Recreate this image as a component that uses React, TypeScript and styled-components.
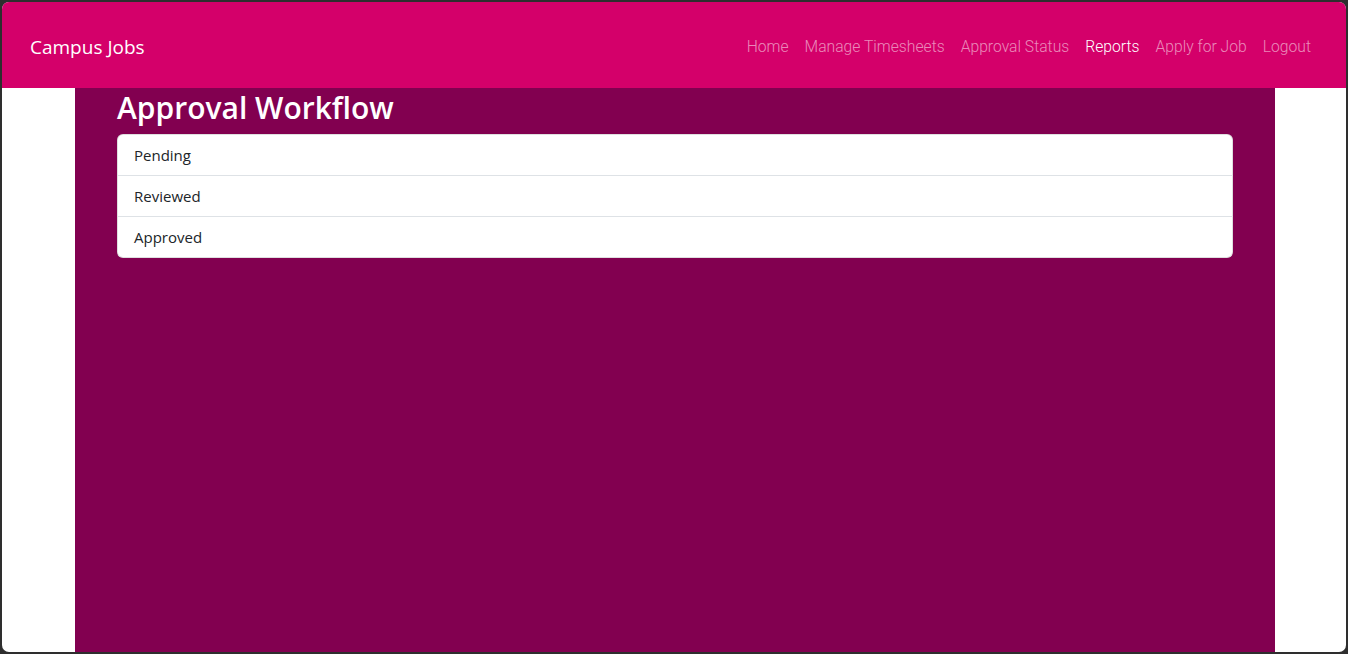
import React from "react";
import styled, { createGlobalStyle } from "styled-components";

const GlobalStyle = createGlobalStyle`
  html, body { margin: 0; padding: 0; height: 100%; }
  body {
    background: #2e2e2e;
    font-family: "Open Sans", "Noto Sans", sans-serif;
    overflow: hidden;
  }
  #root { height: 100%; }
`;

const Frame = styled.div`
  box-sizing: border-box;
  height: 654px;
  padding: 2px;
  background: #2e2e2e;
`;

const Window = styled.div`
  height: 100%;
  background: #ffffff;
  border-radius: 7px;
  overflow: hidden;
  display: flex;
  flex-direction: column;
`;

const NavBar = styled.nav`
  flex: 0 0 86px;
  background: #d4006a;
  display: flex;
  align-items: center;
  justify-content: space-between;
  padding: 0 27px 0 28px;
`;

const Brand = styled.a`
  color: #ffffff;
  font-family: "Open Sans", sans-serif;
  font-size: 19px;
  font-weight: 400;
  text-decoration: none;
  padding-top: 4px;
`;

const NavList = styled.ul`
  list-style: none;
  margin: 0;
  padding: 2px 0 0;
  display: flex;
`;

const NavLink = styled.a<{ $active?: boolean }>`
  display: block;
  padding: 8px 8px;
  font-family: "Roboto", sans-serif;
  font-weight: 300;
  font-size: 15.7px;
  text-decoration: none;
  color: ${(p) => (p.$active ? "#ffffff" : "rgba(255,255,255,0.55)")};
`;

const Main = styled.main`
  flex: 1;
  display: flex;
  justify-content: center;
  padding-left: 2px;
`;

const Container = styled.div`
  width: 1200px;
  box-sizing: border-box;
  background: #820050;
  padding: 0 42px;
`;

const Title = styled.h1`
  margin: 0 0 8px;
  padding-top: 1px;
  font-family: "Open Sans", sans-serif;
  font-size: 30px;
  font-weight: 600;
  line-height: 37px;
  color: #ffffff;
`;

const ListGroup = styled.ul`
  list-style: none;
  margin: 0;
  padding: 0;
  background: #ffffff;
  border: 1px solid rgba(0, 0, 0, 0.125);
  border-radius: 6px;
  overflow: hidden;
`;

const ListItem = styled.li`
  padding: 8px 16px;
  font-family: "Open Sans", sans-serif;
  font-size: 15px;
  line-height: 24px;
  color: #212529;
  & + & { border-top: 1px solid #dee2e6; }
`;

const links = [
  "Home",
  "Manage Timesheets",
  "Approval Status",
  "Reports",
  "Apply for Job",
  "Logout",
];

export default function App() {
  return (
    <>
      <GlobalStyle />
      <Frame>
        <Window>
          <NavBar>
            <Brand href="#">Campus Jobs</Brand>
            <NavList>
              {links.map((l) => (
                <li key={l}>
                  <NavLink href="#" $active={l === "Reports"}>
                    {l}
                  </NavLink>
                </li>
              ))}
            </NavList>
          </NavBar>
          <Main>
            <Container>
              <Title>Approval Workflow</Title>
              <ListGroup>
                <ListItem>Pending</ListItem>
                <ListItem>Reviewed</ListItem>
                <ListItem>Approved</ListItem>
              </ListGroup>
            </Container>
          </Main>
        </Window>
      </Frame>
    </>
  );
}
